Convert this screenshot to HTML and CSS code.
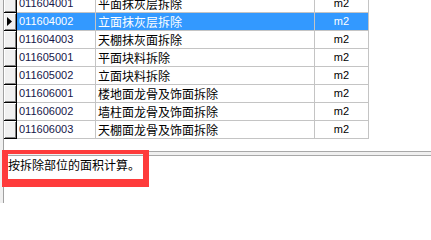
FILE: index.html
```html
<!DOCTYPE html>
<html>
<head>
<meta charset="utf-8">
<link rel="stylesheet" href="styles.css">
</head>
<body>
<div class="app">
  <div class="gutter"></div>
  <div class="content">
    <div class="grid-area">
      <div class="grid">
        <div class="row"><div class="ind"></div><div class="cell code">011604001</div><div class="cell name">平面抹灰层拆除</div><div class="cell unit">m2</div></div>
        <div class="row sel"><div class="ind"><svg class="arrow" width="12" height="17" viewBox="0 0 12 17"><polygon points="3,4 8,8.5 3,13" fill="#000"/></svg></div><div class="cell code">011604002</div><div class="cell name">立面抹灰层拆除</div><div class="cell unit">m2</div></div>
        <div class="row"><div class="ind"></div><div class="cell code">011604003</div><div class="cell name">天棚抹灰面拆除</div><div class="cell unit">m2</div></div>
        <div class="row"><div class="ind"></div><div class="cell code">011605001</div><div class="cell name">平面块料拆除</div><div class="cell unit">m2</div></div>
        <div class="row"><div class="ind"></div><div class="cell code">011605002</div><div class="cell name">立面块料拆除</div><div class="cell unit">m2</div></div>
        <div class="row"><div class="ind"></div><div class="cell code">011606001</div><div class="cell name">楼地面龙骨及饰面拆除</div><div class="cell unit">m2</div></div>
        <div class="row"><div class="ind"></div><div class="cell code">011606002</div><div class="cell name">墙柱面龙骨及饰面拆除</div><div class="cell unit">m2</div></div>
        <div class="row"><div class="ind"></div><div class="cell code">011606003</div><div class="cell name">天棚面龙骨及饰面拆除</div><div class="cell unit">m2</div></div>
      </div>
    </div>
    <div class="splitter"></div>
    <div class="memo">按拆除部位的面积计算。</div>
  </div>
</div>
<div class="mark"></div>
</body>
</html>
```
FILE: styles.css
```css
html, body {
  margin: 0;
  padding: 0;
  width: 431px;
  height: 203px;
  overflow: hidden;
  background: #ffffff;
}
.app {
  display: flex;
  height: 203px;
}
.gutter {
  width: 3px;
  background: #f0f0f0;
  border-right: 1px solid #a0a0a0;
  flex: none;
}
.content {
  flex: 1;
  display: flex;
  flex-direction: column;
  min-width: 0;
}
.grid-area {
  height: 151px;
  overflow: hidden;
  background: #ffffff;
  flex: none;
}
.grid {
  margin-top: -5px;
  width: 364px;
}
.row {
  display: grid;
  grid-template-columns: 13px 79px 219px 54px;
  height: 18px;
}
.ind {
  background: #f0f0f0;
  box-shadow: inset 1px 1px 0 #ffffff, inset -1px -1px 0 #808080;
  border-right: 1px solid #000000;
  border-bottom: 1px solid #000000;
  position: relative;
}
.arrow {
  position: absolute;
  left: 0;
  top: 0;
}
.cell {
  border-right: 1px solid #c4c4c4;
  border-bottom: 1px solid #c4c4c4;
  height: 17px;
  line-height: 17px;
  white-space: nowrap;
  overflow: hidden;
}
.code {
  font-family: "Liberation Sans", Arial, sans-serif;
  font-size: 11px;
  color: #16164a;
  padding-left: 2px;
}
.name {
  font-family: "Noto Sans CJK SC", sans-serif;
  font-size: 12px;
  color: #000000;
  padding-left: 2px;
}
.unit {
  font-family: "Liberation Sans", Arial, sans-serif;
  font-size: 11px;
  color: #000000;
  text-align: center;
}
.sel .cell {
  background: #3399ff;
  color: #ffffff;
}
.splitter {
  height: 3px;
  border-top: 1px solid #a8a8a8;
  border-bottom: 1px solid #a8a8a8;
  background: #f0f0f0;
  flex: none;
}
.memo {
  flex: 1;
  background: #ffffff;
  font-family: "Noto Sans CJK SC", sans-serif;
  font-size: 12px;
  line-height: 14px;
  color: #000000;
  padding: 2px 0 0 4px;
  white-space: nowrap;
}
.mark {
  position: absolute;
  left: 2px;
  top: 150px;
  width: 135px;
  height: 25px;
  border-style: solid;
  border-color: #fe3b3b;
  border-width: 4px 6px 8px 6px;
}
```
